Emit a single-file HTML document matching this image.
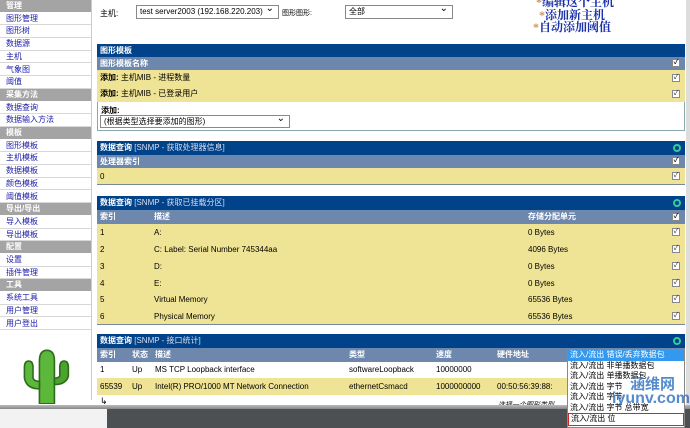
<!DOCTYPE html>
<html><head><meta charset="utf-8"><style>
*{margin:0;padding:0;box-sizing:border-box}
body{width:690px;height:428px;overflow:hidden;background:#fff;font-family:"Liberation Sans","Noto Sans CJK SC",sans-serif;font-size:8px;color:#000;position:relative}
.a{position:absolute}
.sb{position:absolute;left:0;width:91px;height:12.7px;line-height:12.7px;font-size:8px;padding-left:6px;color:#1a1aa8;border-bottom:1px solid #d8d8d8}
.sh{background:#a4a4a4;color:#fff;font-weight:bold;border-bottom:1px solid #fff}
.hd{position:absolute;left:97px;width:588px;background:#00438a;color:#fff;font-weight:bold;padding-left:3px;font-size:8px}
.hd span{font-weight:normal;color:#dde}
.sub{position:absolute;left:97px;width:588px;background:#6e88ad;color:#fff;font-weight:bold;padding-left:3px;font-size:8px}
.y{position:absolute;left:97px;width:588px;background:#efe495;padding-left:3px;font-size:8px}
.w{background:#fff}
.cb{position:absolute;right:5px;width:8px;height:8px;border:1px solid #888;background:#fff;font-size:7px;line-height:6px;text-align:center;color:#222}
.ci{position:absolute;right:4px;width:8px;height:8px;border:2px solid #3c9;border-radius:50%}
.sel{position:absolute;border:1px solid #888;background:#fff;font-size:8px;padding-left:3px;line-height:12px}
.sel:after{content:"⌄";position:absolute;right:4px;top:-3px;font-size:10px}
.lk{position:absolute;color:#1a2fa8;font-weight:bold;font-family:"Liberation Serif","Noto Serif CJK SC",serif;font-size:12px}
.lk b{color:#c96}
</style></head><body>
<div class="sb sh" style="top:0">管理</div>
<div class="sb" style="top:12.7px">图形管理</div>
<div class="sb" style="top:25.4px">图形树</div>
<div class="sb" style="top:38px">数据源</div>
<div class="sb" style="top:50.8px">主机</div>
<div class="sb" style="top:63.5px">气象图</div>
<div class="sb" style="top:76.2px">阈值</div>
<div class="sb sh" style="top:89px">采集方法</div>
<div class="sb" style="top:101.6px">数据查询</div>
<div class="sb" style="top:114.3px">数据输入方法</div>
<div class="sb sh" style="top:127px">模板</div>
<div class="sb" style="top:139.7px">图形模板</div>
<div class="sb" style="top:152.4px">主机模板</div>
<div class="sb" style="top:165px">数据模板</div>
<div class="sb" style="top:177.8px">颜色模板</div>
<div class="sb" style="top:190.5px">阈值模板</div>
<div class="sb sh" style="top:203.2px">导出/导出</div>
<div class="sb" style="top:216px">导入模板</div>
<div class="sb" style="top:228.6px">导出模板</div>
<div class="sb sh" style="top:241.3px">配置</div>
<div class="sb" style="top:254px">设置</div>
<div class="sb" style="top:266.7px">插件管理</div>
<div class="sb sh" style="top:279.4px">工具</div>
<div class="sb" style="top:292px">系统工具</div>
<div class="sb" style="top:304.8px">用户管理</div>
<div class="sb" style="top:317.5px">用户登出</div>
<svg class="a" style="left:18px;top:348px" width="60" height="56" viewBox="0 0 56 52">
<path d="M20 52 L20 12 Q20 2 27 2 Q34 2 34 12 L34 52Z" fill="#5cb83a" stroke="#2e6b1c" stroke-width="1.5"/>
<path d="M20 38 Q8 38 6 28 L6 18 Q6 12 10 12 Q14 12 14 18 L14 28 Q15 31 20 31Z" fill="#5cb83a" stroke="#2e6b1c" stroke-width="1.5"/>
<path d="M34 34 Q45 34 47 26 L47 18 Q47 12 43 12 Q39 12 39 18 L39 26 Q38 28 34 28Z" fill="#4aa52c" stroke="#2e6b1c" stroke-width="1.5"/>
</svg>
<div class="a" style="left:91px;top:0;width:1px;height:400px;background:#ccc"></div>
<div class="a" style="left:100px;top:8px;font-size:8px">主机:</div>
<div class="sel" style="left:136px;top:5px;width:143px;height:14px">test server2003 (192.168.220.203)</div>
<div class="a" style="left:282px;top:8px;font-size:7px">图形图形:</div>
<div class="sel" style="left:345px;top:5px;width:108px;height:14px">全部</div>
<div class="lk" style="left:536px;top:-7px"><b>*</b>编辑这个主机</div>
<div class="lk" style="left:539px;top:6px"><b>*</b>添加新主机</div>
<div class="lk" style="left:533px;top:18px"><b>*</b>自动添加阈值</div>
<div class="hd" style="top:44px;height:13px;line-height:13px">图形模板</div>
<div class="sub" style="top:57px;height:13px;line-height:13px">图形模板名称<div class="cb" style="top:2px">✓</div></div>
<div class="y" style="top:70px;height:16px;line-height:16px"><b>添加:</b> 主机MIB - 进程数量<div class="cb" style="top:4px">✓</div></div>
<div class="y" style="top:86px;height:16px;line-height:16px"><b>添加:</b> 主机MIB - 已登录用户<div class="cb" style="top:4px">✓</div></div>
<div class="y w" style="top:102px;height:29px;border:1px solid #8aa;border-top:0"><b style="position:absolute;top:3px">添加:</b></div>
<div class="sel" style="left:100px;top:115px;width:190px;height:13px">(根据类型选择要添加的图形)</div>
<div class="hd" style="top:141px;height:14px;line-height:14px">数据查询 <span>[SNMP - 获取处理器信息]</span><div class="ci" style="top:3px"></div></div>
<div class="sub" style="top:155px;height:13px;line-height:13px">处理器索引<div class="cb" style="top:2px">✓</div></div>
<div class="y" style="top:168px;height:17px;line-height:17px;border-bottom:1px solid #789">0<div class="cb" style="top:4px">✓</div></div>
<div class="hd" style="top:196px;height:14px;line-height:14px">数据查询 <span>[SNMP - 获取已挂载分区]</span><div class="ci" style="top:3px"></div></div>
<div class="sub" style="top:210px;height:14px;line-height:14px">索引<span class="a" style="left:57px">描述</span><span class="a" style="left:431px">存储分配单元</span><div class="cb" style="top:3px">✓</div></div>
<div class="y" style="top:224px;height:101px;border-bottom:1px solid #789"></div>
<div class="y" style="top:224px;height:17px;line-height:17px;background:none">1<span class="a" style="left:57px">A:</span><span class="a" style="left:431px">0 Bytes</span><div class="cb" style="top:4px">✓</div></div>
<div class="y" style="top:241px;height:17px;line-height:17px;background:none">2<span class="a" style="left:57px">C: Label: Serial Number 745344aa</span><span class="a" style="left:431px">4096 Bytes</span><div class="cb" style="top:4px">✓</div></div>
<div class="y" style="top:258px;height:17px;line-height:17px;background:none">3<span class="a" style="left:57px">D:</span><span class="a" style="left:431px">0 Bytes</span><div class="cb" style="top:4px">✓</div></div>
<div class="y" style="top:275px;height:17px;line-height:17px;background:none">4<span class="a" style="left:57px">E:</span><span class="a" style="left:431px">0 Bytes</span><div class="cb" style="top:4px">✓</div></div>
<div class="y" style="top:291px;height:17px;line-height:17px;background:none">5<span class="a" style="left:57px">Virtual Memory</span><span class="a" style="left:431px">65536 Bytes</span><div class="cb" style="top:4px">✓</div></div>
<div class="y" style="top:308px;height:17px;line-height:17px;background:none">6<span class="a" style="left:57px">Physical Memory</span><span class="a" style="left:431px">65536 Bytes</span><div class="cb" style="top:4px">✓</div></div>
<div class="hd" style="top:334px;height:14px;line-height:14px">数据查询 <span>[SNMP - 接口统计]</span><div class="ci" style="top:3px"></div></div>
<div class="sub" style="top:348px;height:14px;line-height:14px">索引<span class="a" style="left:35px">状态</span><span class="a" style="left:58px">描述</span><span class="a" style="left:252px">类型</span><span class="a" style="left:339px">速度</span><span class="a" style="left:400px">硬件地址</span></div>
<div class="y w" style="top:362px;height:16px;line-height:16px">1<span class="a" style="left:35px">Up</span><span class="a" style="left:58px">MS TCP Loopback interface</span><span class="a" style="left:252px">softwareLoopback</span><span class="a" style="left:339px">10000000</span></div>
<div class="y" style="top:378px;height:17px;line-height:17px">65539<span class="a" style="left:35px">Up</span><span class="a" style="left:58px">Intel(R) PRO/1000 MT Network Connection</span><span class="a" style="left:252px">ethernetCsmacd</span><span class="a" style="left:339px">1000000000</span><span class="a" style="left:400px">00:50:56:39:88:</span></div>
<div class="a" style="left:100px;top:396px;font-size:9px">↳</div>
<div class="a" style="left:498px;top:400px;font-size:7px;font-style:italic">选择一个图形类型</div>
<div class="a" style="left:0;top:405px;width:690px;height:4px;background:linear-gradient(#bbb,#888)"></div>
<div class="a" style="left:0;top:409px;width:107px;height:19px;background:#f2f2f2"></div>
<div class="a" style="left:107px;top:409px;width:583px;height:19px;background:#4d5052"></div>
<div class="a" style="left:686px;top:0;width:4px;height:405px;background:#ddd"></div>
<div class="a" style="left:567px;top:349px;width:118px;height:79px;background:#fff;border:1px solid #888;font-size:8px;line-height:10.5px">
<div style="background:#3399ee;color:#fff;padding-left:2px">流入/流出 错误/丢弃数据包</div>
<div style="padding-left:2px">流入/流出 非单播数据包</div>
<div style="padding-left:2px">流入/流出 单播数据包</div>
<div style="padding-left:2px">流入/流出 字节</div>
<div style="padding-left:2px">流入/流出 字节</div>
<div style="padding-left:2px">流入/流出 字节 总带宽</div>
<div style="padding-left:2px;border:1px solid #d22">流入/流出 位</div>
</div>
<div class="a" style="left:630px;top:373px;color:#2a6fbf;font-size:15px;font-weight:bold;opacity:.8">涵维网</div>
<div class="a" style="left:612px;top:390px;color:#2a6fbf;font-size:16px;font-weight:bold;opacity:.8">iyunv.com</div>
</body></html>
